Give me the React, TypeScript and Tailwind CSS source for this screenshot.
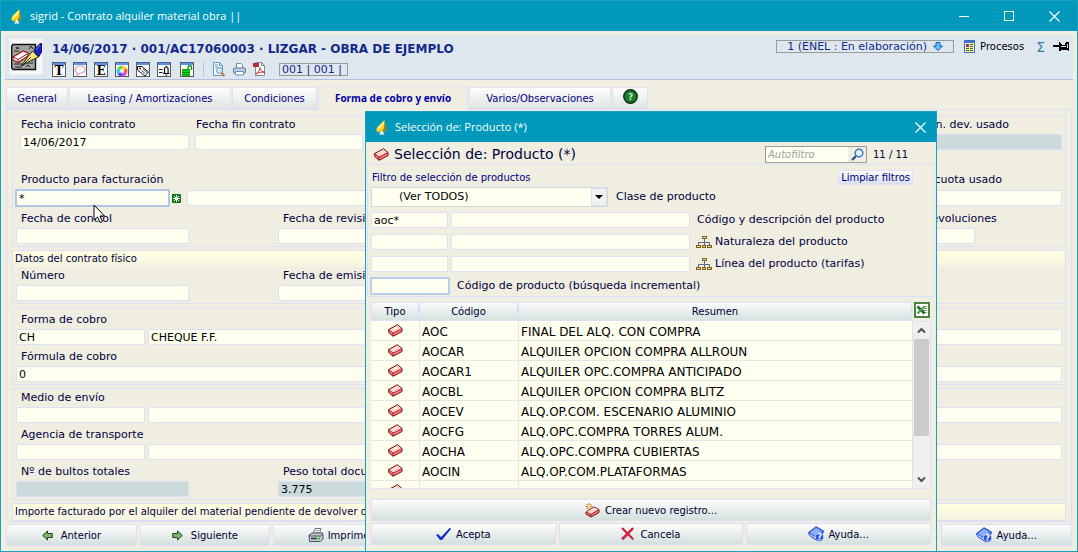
import type { ReactNode } from 'react'

const tabs = [
  { label: 'General', width: 'w-[62px]' },
  { label: 'Leasing / Amortizaciones', width: 'w-[162px]' },
  { label: 'Condiciones', width: 'w-[85px]' },
  { label: 'Forma de cobro y envío', width: 'w-[150px]', active: true },
  { label: 'Varios/Observaciones', width: 'w-[142px]' },
]

const products = [
  { code: 'AOC', summary: 'FINAL DEL ALQ. CON COMPRA' },
  { code: 'AOCAR', summary: 'ALQUILER OPCION COMPRA ALLROUN' },
  { code: 'AOCAR1', summary: 'ALQUILER OPC.COMPRA ANTICIPADO' },
  { code: 'AOCBL', summary: 'ALQUILER OPCION COMPRA BLITZ' },
  { code: 'AOCEV', summary: 'ALQ.OP.COM. ESCENARIO ALUMINIO' },
  { code: 'AOCFG', summary: 'ALQ.OPC.COMPRA TORRES ALUM.' },
  { code: 'AOCHA', summary: 'ALQ.OPC.COMPRA CUBIERTAS' },
  { code: 'AOCIN', summary: 'ALQ.OP.COM.PLATAFORMAS' },
  { code: '', summary: '' },
]

const inputBase = 'block h-4 min-w-0 rounded-[1px] border border-[#dedef4] px-0.5 text-[11px] leading-[14px] text-black outline-none'
const buttonBase =
  'flex h-[22px] items-center justify-center rounded-[1px] border border-[#dedef6] bg-linear-to-b from-[#fdfdfc] to-[#d5dfdf] text-[10px] text-[#000030]'

/* ---------- icons ---------- */

function SpadeIcon() {
  return (
    <svg width="11" height="15" viewBox="0 0 11 15" aria-hidden="true">
      <path d="M8.500 0L3.500 5C1 7 0 9 .5 10.500C1 12.500 3.500 12.500 5 11H6.500C8 12 10 11.500 10 9.500C10 7.500 8.800 6 8.500 0Z" fill="#ffd21a" />
      <path d="M8 1L3.500 5.500C2 7 1 8.500 1 10L4 8.500L7.500 5Z" fill="#fff176" />
      <path d="M8.500 0C8.800 6 10 7.500 10 9.500C10 11 8.500 12 6.500 11C8 9 8.500 6 8.500 0Z" fill="#a8780f" />
      <path d="M3 14.500L5 11H6.500L8.500 14.500Z" fill="#eef3f4" />
    </svg>
  )
}

function EraserIcon() {
  return (
    <svg width="15" height="13" viewBox="0 0 15 13" aria-hidden="true">
      <path d="M.7 5.500L9.500 .7L14 4.500V7.500L5 12.300L.7 8.500Z" fill="#ff7f7f" />
      <path d="M.7 5.500L9.500 .7L14 4.500L5 9Z" fill="#ffd9d5" />
      <path d="M.7 5.500L9.500 .7L14 4.500V7.500L5 12.300L.7 8.500Z" fill="none" stroke="#7d0a0a" strokeLinejoin="round" />
      <path d="M.7 5.500L5 9.200L14 4.500M5 9V12" fill="none" stroke="#8f1414" strokeWidth=".9" />
    </svg>
  )
}

function NewEraserIcon() {
  return (
    <svg width="15" height="15" viewBox="0 0 15 15" aria-hidden="true">
      <path d="M1 9L9 4L14 6.500V9.500L6 14L1 11Z" fill="#ff7f7f" stroke="#7d0a0a" strokeLinejoin="round" />
      <path d="M1.500 9L9 4.500L13.500 6.500L6 11Z" fill="#ffd9d5" />
      <path d="M1 9L6 11.500L14 6.500M6 11.500V14" fill="none" stroke="#8f1414" strokeWidth=".9" />
      <path d="M4 0V7M.5 3.500H7.500M1.500 1L6.500 6M6.500 1L1.500 6" stroke="#c47c1c" />
      <circle cx="4" cy="3.500" r="1.300" fill="#fff2a8" />
    </svg>
  )
}

function ContractIcon() {
  return (
    <svg width="31" height="29" viewBox="0 0 31 29" aria-hidden="true">
      <path d="M2 2.500H24.500V27.500H2L.7 26V4Z" fill="#a3a5a5" stroke="#111" strokeWidth="1.400" />
      <path d="M5 5l1 2 1-2 1 2M18 7l2-3 2 3M4 25h7M15 25l2-2 2 2M3 22h9M14 21h8M16 18h6M3 9h5" fill="none" stroke="#222" />
      <path d="M2 15L12 9L17 11V14L7 20.500L2 18Z" fill="#fff" stroke="#a01515" strokeWidth="1.200" />
      <path d="M2 15L7 17.500L17 11.500M7 17.500V20.500" fill="none" stroke="#a01515" />
      <path d="M23 8L29 1.500H30.500V10L27.500 15Z" fill="#1523c9" stroke="#070a50" />
      <path d="M25 8L29 3" stroke="#6f86ff" />
      <path d="M21.500 9L27.500 15L20 18.500L10.500 24L17 14.500Z" fill="#f3e77a" stroke="#2b2a10" />
      <path d="M11 24L20 15" stroke="#2b2a10" />
    </svg>
  )
}

function ToolFrame({ children }: { children?: ReactNode }) {
  return (
    <svg width="14" height="15" viewBox="0 0 14 15" aria-hidden="true">
      <rect x=".5" y=".5" width="13" height="14" fill="#fdfdfd" stroke="#595959" />
      <rect width="14" height="1" fill="#4a5f80" />
      <rect x="1" y="1" width="12" height="2" fill="#5d92e6" />
      {children}
    </svg>
  )
}

function LetterTool({ letter }: { letter: string }) {
  return (
    <ToolFrame>
      <text x="7" y="13" textAnchor="middle" fontFamily="'DejaVu Serif', serif" fontWeight="700" fontSize="12">
        {letter}
      </text>
    </ToolFrame>
  )
}

function BubbleTool() {
  return (
    <ToolFrame>
      <path d="M7 4C10 4 12 5.500 12 7.500S10 11 7 11L4 13.500V10.500C1 9 2 4 7 4Z" fill="#fff" stroke="#d9a0b4" strokeWidth="1.200" />
    </ToolFrame>
  )
}

function ColorTool() {
  return (
    <ToolFrame>
      <path d="M7 9V3.500A5.500 5.500 0 0 1 11.800 6.200Z" fill="#ffcf30" />
      <path d="M7 9L11.800 6.200A5.500 5.500 0 0 1 11.800 11.700Z" fill="#ff5a3c" />
      <path d="M7 9L11.800 11.700A5.500 5.500 0 0 1 7 14.500Z" fill="#e63ce0" />
      <path d="M7 9V14.500A5.500 5.500 0 0 1 2.200 11.700Z" fill="#4456ff" />
      <path d="M7 9L2.200 11.700A5.500 5.500 0 0 1 2.200 6.200Z" fill="#31d4e8" />
      <path d="M7 9L2.200 6.200A5.500 5.500 0 0 1 7 3.500Z" fill="#5de03c" />
      <circle cx="7" cy="9" r="2.200" fill="#fff" opacity=".8" />
    </ToolFrame>
  )
}

function TagTool() {
  return (
    <ToolFrame>
      <path d="M1.500 4.500H6L12.500 10L9 14L1.500 8Z" fill="#fff" stroke="#111" />
      <circle cx="4" cy="6.500" r=".9" fill="#111" />
      <path d="M5.500 8.500L9 11.500M7 7L11 10.500" stroke="#333" strokeWidth=".9" />
    </ToolFrame>
  )
}

function AlarmTool() {
  return (
    <ToolFrame>
      <path d="M2 7.500h3.500M2 10.500h3.500" stroke="#111" />
      <path d="M7.500 11.500V7a1.800 2 0 0 1 3.600 0v4.500M6 11.500h6.500M9.300 4v1M8.300 13h2" fill="none" stroke="#111" strokeWidth="1.200" />
    </ToolFrame>
  )
}

function UnlockTool() {
  return (
    <ToolFrame>
      <path d="M8 8V5.500a1.700 1.700 0 0 1 3.500 0V8" fill="none" stroke="#0a930a" strokeWidth="1.400" />
      <rect x="2" y="7" width="8" height="7" fill="#12d812" />
      <path d="M2 8h8M2 10.500h8M2 13h8" stroke="#067a06" strokeWidth=".8" />
    </ToolFrame>
  )
}

function PreviewIcon() {
  return (
    <svg width="14" height="15" viewBox="0 0 14 15" aria-hidden="true">
      <path d="M1.500 .5H7.500L10.500 3.500V13.500H1.500Z" fill="#f3f8fd" stroke="#5e9ad0" />
      <path d="M7.500 .5V3.500H10.500M3 3h3M3 5h3" fill="none" stroke="#5e9ad0" />
      <circle cx="7.500" cy="8.500" r="3" fill="#cfe6f7" stroke="#6d8fa8" />
      <path d="M9.500 11L12.500 14" stroke="#c27a25" strokeWidth="2" />
    </svg>
  )
}

function SmallPrinterIcon() {
  return (
    <svg width="13" height="13" viewBox="0 0 13 13" aria-hidden="true">
      <path d="M3.500 5V.5H8L9.500 2V5" fill="#fff" stroke="#5f93c4" />
      <rect x=".5" y="5" width="12" height="5" rx="1" fill="#c3ced9" stroke="#66798c" />
      <path d="M2.500 8.500h8v3.500h-8z" fill="#fff" stroke="#5f93c4" />
    </svg>
  )
}

function PdfIcon() {
  return (
    <svg width="13" height="14" viewBox="0 0 13 14" aria-hidden="true">
      <path d="M2.500 .5H8.500L11.500 3.500V13.500H2.500Z" fill="#fff" stroke="#8a8a8a" />
      <path d="M8.500 .5V3.500H11.500" fill="none" stroke="#8a8a8a" />
      <rect y="1" width="6" height="4" fill="#b52a35" />
      <path d="M3 12C6 9 7 7 7 5.500C7 8 9 10 12 10.500C8 9.500 5 10.500 3 12Z" fill="none" stroke="#c9303c" />
    </svg>
  )
}

function BlueDownIcon() {
  return (
    <svg width="10" height="9" viewBox="0 0 10 9" aria-hidden="true">
      <path d="M3 .5H7V4H9.500L5 8.500L.5 4H3Z" fill="#5cc4fb" stroke="#1f56c9" strokeLinejoin="round" />
    </svg>
  )
}

function ProcessIcon() {
  return (
    <svg width="11" height="13" viewBox="0 0 11 13" shapeRendering="crispEdges" aria-hidden="true">
      <rect width="11" height="13" fill="#3c6fc8" />
      <rect x="1" y="3" width="9" height="9" fill="#fdf79b" />
      <rect x="2" y="4" width="3" height="3" fill="#9d1fb0" />
      <path d="M6 4.500h3M6 6.500h3M2 8.500h3M6 8.500h3M2 10.500h3M6 10.500h3" stroke="#3a6a2b" />
    </svg>
  )
}

function PinIcon() {
  return (
    <svg width="16" height="11" viewBox="0 0 16 11" shapeRendering="crispEdges" aria-hidden="true">
      <path d="M0 5H6" stroke="#000" strokeWidth="2" />
      <path d="M6 1h1v1h1v1h1v1h3V2h1V1h3v9h-1V9H8v1H6Z" fill="#000" />
      <path d="M8 5h5v1H8ZM14 3h1v4h-1Z" fill="#d9dfe2" />
    </svg>
  )
}

function HelpTabIcon() {
  return (
    <svg width="15" height="15" viewBox="0 0 15 15" aria-hidden="true">
      <circle cx="7.500" cy="7.500" r="6.700" fill="#1c7c2c" stroke="#0b2e10" strokeWidth="1.400" />
      <text x="7.500" y="11" textAnchor="middle" fontFamily="'DejaVu Sans', sans-serif" fontWeight="700" fontSize="9" fill="#b6f3bd">
        ?
      </text>
    </svg>
  )
}

function ArrowIcon({ flip }: { flip?: boolean }) {
  return (
    <svg width="11" height="11" viewBox="0 0 11 11" className={flip ? 'rotate-180' : ''} aria-hidden="true">
      <path d="M.7 5.500L5.500 1V3.500H10.300V7.500H5.500V10Z" fill="#7cb86c" stroke="#26401f" strokeLinejoin="round" />
    </svg>
  )
}

function PrinterIcon() {
  return (
    <svg width="16" height="14" viewBox="0 0 16 14" aria-hidden="true">
      <path d="M5 6L7 .5H13L11.500 6Z" fill="#fff" stroke="#6f7c85" />
      <path d="M7.500 2.500H11.500M7 4.500H11" stroke="#8da0ac" />
      <path d="M1 7L4 5H14.500L15 7V11L12.500 13.500H1.500Z" fill="#c3ccd1" stroke="#4a545b" />
      <path d="M1 8H12.500L15 6" fill="none" stroke="#4a545b" />
      <path d="M3 10.500H9" stroke="#2b3135" strokeWidth="1.500" />
      <rect x="10" y="9.500" width="2" height="2" fill="#1fd31f" />
    </svg>
  )
}

function HelpBookIcon() {
  return (
    <svg width="16" height="16" viewBox="0 0 16 16" aria-hidden="true">
      <path d="M.5 6.500L8 .7L15.500 5L14.500 8L9 14.500L1.500 9.500Z" fill="#4f7df0" stroke="#2748b8" strokeLinejoin="round" />
      <path d="M2 6.500L8 2L13 5L8 10Z" fill="#8fb0ff" />
      <path d="M1.500 8.500L8 12.500" stroke="#dfe8ff" />
      <circle cx="11.500" cy="11" r="4.200" fill="#2d57dd" stroke="#dbe5ff" strokeWidth=".7" />
      <text x="11.500" y="14" textAnchor="middle" fontFamily="'DejaVu Sans', sans-serif" fontWeight="700" fontSize="8" fill="#fff">
        ?
      </text>
    </svg>
  )
}

function TreeIcon() {
  return (
    <svg width="16" height="13" viewBox="0 0 16 13" shapeRendering="crispEdges" aria-hidden="true">
      <path d="M8.500 3V9M2.500 9V6.500H13.500V9" fill="none" stroke="#5b6e86" />
      <g fill="#f2dc8c" stroke="#7c5f22">
        <rect x="6.500" y=".5" width="4" height="2" />
        <rect x=".5" y="9.500" width="4" height="2" />
        <rect x="6.500" y="9.500" width="3" height="2" />
        <rect x="11.500" y="9.500" width="4" height="2" />
      </g>
    </svg>
  )
}

function SearchIcon() {
  return (
    <svg width="13" height="13" viewBox="0 0 13 13" aria-hidden="true">
      <path d="M5 8L1 12" stroke="#23447c" strokeWidth="2" />
      <circle cx="8" cy="5" r="3.800" fill="#e9f4fc" stroke="#3b78bd" strokeWidth="1.500" />
    </svg>
  )
}

function ExcelIcon() {
  return (
    <svg width="16" height="16" viewBox="0 0 16 16" aria-hidden="true">
      <rect x="1" y="1" width="14" height="14" fill="#fff" stroke="#4d8443" strokeWidth="2" />
      <path d="M9 4.500H13M9 6.500H13M9 8.500H13M9 10.500H13" stroke="#6fa868" />
      <path d="M3.500 4.500L10.500 11.500" stroke="#1f6b2a" strokeWidth="2.600" />
      <path d="M10.500 4.500L3.500 11.500" stroke="#4c9a4c" strokeWidth="2" />
    </svg>
  )
}

function CheckIcon() {
  return (
    <svg width="15" height="13" viewBox="0 0 15 13" aria-hidden="true">
      <path d="M0 7L2 6L5 9L14 0L15 1L6 12H4Z" fill="#1534d8" />
      <path d="M14 0L5.500 10" stroke="#0c1e7a" strokeWidth=".7" />
    </svg>
  )
}

function CrossIcon() {
  return (
    <svg width="14" height="14" viewBox="0 0 14 14" aria-hidden="true">
      <path d="M2 2L12.500 13M12.500 1.500L2 13" stroke="#8b8f99" strokeWidth="1.500" />
      <path d="M1 1L12 12M12 1L1 12" stroke="#d8173a" strokeWidth="2" />
    </svg>
  )
}

function CloseIcon() {
  return (
    <svg width="11" height="11" viewBox="0 0 11 11" aria-hidden="true">
      <path d="M.5 .5L10.500 10.500M10.500 .5L.5 10.500" stroke="#fff" strokeWidth="1.200" />
    </svg>
  )
}

function ChevronIcon({ down }: { down?: boolean }) {
  return (
    <svg width="9" height="7" viewBox="0 0 9 7" className={down ? 'rotate-180' : ''} aria-hidden="true">
      <path d="M1 5.500L4.500 2L8 5.500" fill="none" stroke="#505050" strokeWidth="2" />
    </svg>
  )
}

/* ---------- form pieces ---------- */

type FieldProps = {
  id: string
  label: string
  value?: string
  className?: string
  readOnly?: boolean
  labelClass?: string
}

function Field({ id, label, value = '', className = '', readOnly, labelClass = 'pl-[5px]' }: FieldProps) {
  return (
    <div className={className}>
      <label htmlFor={id} className={`block h-[18px] leading-[18px] whitespace-nowrap ${labelClass}`}>
        {label}
      </label>
      <input id={id} defaultValue={value} readOnly={readOnly} className={`${inputBase} w-full ${readOnly ? 'bg-[#cbdada]' : 'bg-[#fffff0]'}`} />
    </div>
  )
}

function CodeField({ id, label, code = '', text = '' }: { id: string; label: string; code?: string; text?: string }) {
  return (
    <div>
      <label htmlFor={id} className="block h-[18px] pl-[5px] leading-[18px]">
        {label}
      </label>
      <div className="flex gap-[3px]">
        <input id={id} defaultValue={code} className={`${inputBase} w-[129px] bg-[#fffff0]`} />
        <input aria-label={label} defaultValue={text} className={`${inputBase} flex-1 bg-[#fffff0]`} />
      </div>
    </div>
  )
}

function Group({ title, children }: { title?: string; children?: ReactNode }) {
  return (
    <section className="rounded-[1px] border border-[#dedef6]">
      {title && (
        <h2 className="h-4 bg-linear-to-b from-[#ffffe0] to-[#f5f3e1] pl-0.5 text-[10px] leading-[15px] whitespace-nowrap">{title}</h2>
      )}
      {children && <div className="flex flex-col gap-[3px] px-[3px] pb-0.5">{children}</div>}
    </section>
  )
}

/* ---------- window ---------- */

function TitleBar() {
  return (
    <div className="flex h-[30px] items-center bg-[#0099bc] pl-[10px] text-white">
      <SpadeIcon />
      <h1 className="ml-2 flex-1 font-['Open_Sans',sans-serif] text-[11px]">sigrid - Contrato alquiler material obra ||</h1>
      <button aria-label="Minimizar" className="flex h-full w-[45px] items-center justify-center">
        <span className="h-px w-2.5 bg-white" />
      </button>
      <button aria-label="Maximizar" className="flex h-full w-[45px] items-center justify-center">
        <span className="size-2.5 border border-white" />
      </button>
      <button aria-label="Cerrar" className="flex h-full w-[46px] items-center justify-center">
        <CloseIcon />
      </button>
    </div>
  )
}

function Header() {
  return (
    <header className="mt-1 flex h-[45px] border-b border-[#b4bfe0] bg-[#dde7ed] pl-1">
      <div className="mt-[3px] flex h-[37px] w-[34px] items-center justify-center border border-[#efeee6] bg-[#f6f7fb]">
        <ContractIcon />
      </div>
      <div className="ml-[9px] flex-1">
        <h2 className="mt-1.5 h-4 text-[12px] leading-4 font-bold whitespace-nowrap text-[#15298b]">
          14/06/2017 · 001/AC17060003 · LIZGAR - OBRA DE EJEMPLO
        </h2>
        <div className="mt-1 flex h-4 items-center gap-[7px]">
          <button aria-label="Texto"><LetterTool letter="T" /></button>
          <button aria-label="Comentario"><BubbleTool /></button>
          <button aria-label="Estado"><LetterTool letter="E" /></button>
          <button aria-label="Color"><ColorTool /></button>
          <button aria-label="Etiqueta"><TagTool /></button>
          <button aria-label="Aviso"><AlarmTool /></button>
          <button aria-label="Bloqueo" className="ml-0.5"><UnlockTool /></button>
          <span className="mr-px ml-0.5 h-[15px] w-px bg-[#b9c3dc]" />
          <button aria-label="Vista previa"><PreviewIcon /></button>
          <button aria-label="Imprimir documento"><SmallPrinterIcon /></button>
          <button aria-label="PDF"><PdfIcon /></button>
          <span className="ml-1.5 h-[13px] w-[69px] border border-[#9a9a9a] pl-0.5 text-[11px] leading-[12px] whitespace-nowrap text-[#15298b]">
            001 | 001 |
          </span>
        </div>
      </div>
      <div className="mt-1 flex h-[15px] items-center pr-1">
        <button className="flex h-[13px] w-[178px] items-center justify-center gap-1.5 border border-[#9a9a9a] text-[11px] leading-[11px] whitespace-nowrap text-[#15298b]">
          1 (ENEL : En elaboración)
          <BlueDownIcon />
        </button>
        <button className="ml-2.5 flex items-center gap-[5px] text-[10px] text-black">
          <ProcessIcon />
          Procesos
        </button>
        <button aria-label="Totales" className="ml-3 text-[14px] leading-3 text-[#2b86ad]">Σ</button>
        <button aria-label="Fijar" className="ml-2"><PinIcon /></button>
      </div>
    </header>
  )
}

function Tabs() {
  return (
    <nav className="mt-[5px] flex h-6 items-end text-[10px] text-[#000080]">
      {tabs.map((tab) =>
        tab.active ? (
          <button
            key={tab.label}
            className={`${tab.width} relative z-10 -mb-px ml-px h-6 border border-b-0 border-[#dedef6] bg-[#f0eee1] font-['Open_Sans',sans-serif] text-[10px] font-bold whitespace-nowrap text-[#0000a8]`}
          >
            {tab.label}
          </button>
        ) : (
          <button
            key={tab.label}
            className={`${tab.width} ml-px h-[22px] border border-[#dedef6] bg-linear-to-b from-[#fdfdfb] to-[#dfe6e4] whitespace-nowrap`}
          >
            {tab.label}
          </button>
        ),
      )}
      <button
        aria-label="Ayuda"
        className="ml-px flex h-[22px] w-9 items-center justify-center border border-[#dedef6] bg-linear-to-b from-[#fdfdfb] to-[#dfe6e4] pb-1"
      >
        <HelpTabIcon />
      </button>
    </nav>
  )
}

function ContractForm() {
  return (
    <main className="mx-px flex flex-col gap-[3px] border border-[#dedef6] px-[5px] pt-[5px]">
      <Group>
        <div className="flex gap-1.5 pl-1">
          <Field id="start" label="Fecha inicio contrato" value="14/06/2017" className="w-[169px]" labelClass="pl-px" />
          <Field id="end" label="Fecha fin contrato" className="w-[168px]" labelClass="pl-px" />
          <Field id="min-dev" label="Mín. dev. usado" readOnly className="ml-auto w-[145px]" labelClass="pl-1.5" />
        </div>
        <div className="mt-[18px]">
          <div className="flex h-[18px] justify-between pl-[5px] leading-[18px]">
            <label htmlFor="product">Producto para facturación</label>
            <label htmlFor="min-quota" className="w-[154px]">Mín. cuota usado</label>
          </div>
          <div className="flex items-center">
            <input
              id="product"
              defaultValue="*"
              className="-ml-px h-[18px] w-[155px] rounded-[1px] border-2 border-[#b0c6e8] bg-[#fffff0] px-0.5 text-[11px] text-black outline-none"
            />
            <button aria-label="Buscar producto" className="ml-0.5 flex size-[9px] items-center justify-center rounded-[1px] bg-[#0b7a16]">
              <svg width="7" height="7" viewBox="0 0 7 7" aria-hidden="true">
                <path d="M3.500 0V7M0 3.500H7M1 1L6 6M6 1L1 6" stroke="#fff" />
              </svg>
            </button>
            <input aria-label="Descripción del producto" className={`${inputBase} ml-1.5 flex-1 bg-[#fffff0]`} />
            <input id="min-quota" className={`${inputBase} ml-[3px] w-[145px] bg-[#fffff0]`} />
          </div>
        </div>
        <div className="flex">
          <Field id="control" label="Fecha de control" className="w-[173px]" />
          <Field id="review" label="Fecha de revisión" className="ml-[89px] w-[173px]" />
          <Field id="returns" label="Devoluciones" className="mr-[87px] ml-auto w-[58px]" labelClass="pl-1.5" />
        </div>
      </Group>

      <Group title="Datos del contrato físico">
        <div className="flex">
          <Field id="number" label="Número" className="w-[173px]" />
          <Field id="issued" label="Fecha de emisión" className="ml-[89px] w-[173px]" />
        </div>
      </Group>

      <Group>
        <div className="pt-[3px]">
          <CodeField id="payment" label="Forma de cobro" code="CH" text="CHEQUE F.F." />
        </div>
        <Field id="formula" label="Fórmula de cobro" value="0" />
      </Group>

      <Group>
        <CodeField id="shipping" label="Medio de envío" />
        <CodeField id="agency" label="Agencia de transporte" />
        <div className="flex">
          <Field id="packages" label="Nº de bultos totales" readOnly className="w-[173px]" />
          <Field id="weight" label="Peso total documento" value="3.775" readOnly className="ml-[89px] w-[173px]" />
        </div>
      </Group>

      <Group title="Importe facturado por el alquiler del material pendiente de devolver de" />
    </main>
  )
}

function ProductDialog() {
  return (
    <div
      role="dialog"
      aria-label="Selección de: Producto (*)"
      className="absolute top-[110px] left-[364px] z-20 w-[572px] border border-[#1a9fbf] bg-[#f0eee1]"
    >
      <div className="flex h-[30px] items-center bg-[#0099bc] pr-2.5 pl-[10px] text-white">
        <SpadeIcon />
        <h2 className="ml-2 flex-1 font-['Open_Sans',sans-serif] text-[11px]">Selección de: Producto (*)</h2>
        <button aria-label="Cerrar selección"><CloseIcon /></button>
      </div>

      <div className="flex h-[22px] items-center pt-0.5 pl-2 text-[14px]">
        <EraserIcon />
        <h3 className="ml-[5px] flex-1">Selección de: Producto (*)</h3>
        <div className="flex h-[17px] w-[102px] items-center border border-[#9a9a9a] bg-[#fffff0]">
          <input
            aria-label="Autofiltro"
            placeholder="Autofiltro"
            className="h-full min-w-0 flex-1 pl-0.5 text-[10px] italic outline-none placeholder:text-[#a0a0a0]"
          />
          <button aria-label="Buscar" className="flex h-full w-[18px] items-center justify-center bg-[#f0eee1]">
            <SearchIcon />
          </button>
        </div>
        <span className="w-[69px] pl-1.5 text-[10px]">11 / 11</span>
      </div>

      <section className="mx-px border border-[#dedef6] pr-5 pb-px pl-[3px]">
        <div className="flex h-[22px] items-center justify-between pt-[3px] text-[10px] text-[#000080]">
          <h4 className="pl-px">Filtro de selección de productos</h4>
          <button className="mr-px h-[15px] rounded-[1px] border border-[#dedef6] bg-linear-to-b from-[#fdfdfc] to-[#d9e0ee] px-0.5 leading-[13px]">
            Limpiar filtros
          </button>
        </div>
        <div className="flex h-[20px] items-center">
          <div className="relative h-[20px] w-[237px]">
            <select
              id="class"
              className="h-full w-full appearance-none border border-[#cfdcdc] bg-[#fffff0] pl-[27px] text-[11px] text-black outline-none"
            >
              <option>(Ver TODOS)</option>
            </select>
            <span className="pointer-events-none absolute top-px right-px flex h-[18px] w-4 items-center justify-center border border-[#dedef6] bg-[#f0f2f2]">
              <span className="border-x-4 border-t-4 border-x-transparent border-t-black" />
            </span>
          </div>
          <label htmlFor="class" className="ml-2">Clase de producto</label>
        </div>
        <div className="mt-[5px] flex flex-col gap-1.5">
          <div className="flex h-4 items-center gap-[3px]">
            <input id="f-code" defaultValue="aoc*" className={`${inputBase} w-[77px] bg-[#fffff0]`} />
            <input aria-label="Descripción" className={`${inputBase} w-[239px] bg-[#fffff0]`} />
            <label htmlFor="f-code" className="ml-1">Código y descripción del producto</label>
          </div>
          <div className="flex h-4 items-center gap-[3px]">
            <input id="f-nature" className={`${inputBase} w-[77px] bg-[#fffff0]`} />
            <input aria-label="Descripción de la naturaleza" className={`${inputBase} w-[239px] bg-[#fffff0]`} />
            <label htmlFor="f-nature" className="ml-[3px] flex items-center gap-[3px]"><TreeIcon />Naturaleza del producto</label>
          </div>
          <div className="flex h-4 items-center gap-[3px]">
            <input id="f-line" className={`${inputBase} w-[77px] bg-[#fffff0]`} />
            <input aria-label="Descripción de la línea" className={`${inputBase} w-[239px] bg-[#fffff0]`} />
            <label htmlFor="f-line" className="ml-[3px] flex items-center gap-[3px]"><TreeIcon />Línea del producto (tarifas)</label>
          </div>
        </div>
        <div className="mt-[5px] flex h-[18px] items-center">
          <input id="f-inc" className="-ml-px h-[18px] w-20 rounded-[1px] border-2 border-[#b9cdec] bg-[#fffff0] outline-none" />
          <label htmlFor="f-inc" className="ml-[7px]">Código de producto (búsqueda incremental)</label>
        </div>
      </section>

      <div className="mx-[5px] mt-[5px] flex h-[187px] overflow-hidden border-b border-[#dedef6]">
        <table className="w-full flex-1 table-fixed border-separate border-spacing-0 self-start bg-[#fffff0] text-[12px] text-black">
          <thead>
            <tr className="h-[19px] bg-linear-to-b from-[#fdfdfc] to-[#d5dfdf] text-[10px] text-[#000030]">
              <th className="w-[49px] border border-r-2 border-[#dedef6] p-0 font-normal">Tipo</th>
              <th className="w-[99px] border border-r-2 border-l-0 border-[#dedef6] p-0 font-normal">Código</th>
              <th className="border border-l-0 border-[#dedef6] p-0 font-normal">Resumen</th>
            </tr>
          </thead>
          <tbody>
            {products.map((product, index) => (
              <tr key={index} className="h-5">
                <td className="border-r border-b border-[#e6e6e6] p-0">
                  <div className="flex h-[19px] items-center justify-center"><EraserIcon /></div>
                </td>
                <td className="border-r border-b border-[#e6e6e6] p-0 pt-[3px] pl-0.5 leading-4">{product.code}</td>
                <td className="border-b border-[#e6e6e6] p-0 pt-[3px] pl-0.5 leading-4 whitespace-nowrap">{product.summary}</td>
              </tr>
            ))}
          </tbody>
        </table>
        <div className="flex w-[19px] flex-col">
          <button aria-label="Exportar a Excel" className="flex h-[19px] items-start justify-center"><ExcelIcon /></button>
          <div className="flex min-h-0 flex-1 flex-col items-center border-x border-t border-[#dedef6] bg-[#f0f0f0]">
            <button aria-label="Subir" className="flex h-[17px] items-center"><ChevronIcon /></button>
            <div className="h-[97px] w-[15px] bg-[#cbcbcb]" />
            <button aria-label="Bajar" className="mt-auto flex h-[17px] items-center"><ChevronIcon down /></button>
          </div>
        </div>
      </div>

      <div className="mx-[5px] mt-2.5 mb-1.5 flex flex-col gap-0.5">
        <button className={`${buttonBase} w-full gap-[5px]`}><NewEraserIcon />Crear nuevo registro...</button>
        <div className="grid grid-cols-3 gap-[3px]">
          <button className={`${buttonBase} gap-[5px]`}><CheckIcon />Acepta</button>
          <button className={`${buttonBase} gap-[5px]`}><CrossIcon />Cancela</button>
          <button className={`${buttonBase} gap-1`}><HelpBookIcon />Ayuda...</button>
        </div>
      </div>
    </div>
  )
}

export default function App() {
  return (
    <div className="relative min-h-screen border border-[#1a9fbf] bg-[#f0eee1] font-['DejaVu_Sans',sans-serif] text-[11px] text-[#000040]">
      <TitleBar />
      <div className="px-1">
        <Header />
        <Tabs />
        <ContractForm />
        <footer className="mx-px mt-0.5 grid grid-cols-8 gap-[3px]">
          <button className={`${buttonBase} gap-2`}><ArrowIcon />Anterior</button>
          <button className={`${buttonBase} gap-2`}><ArrowIcon flip />Siguiente</button>
          <button className={`${buttonBase} gap-1`}><PrinterIcon />Imprime</button>
          <button className={`${buttonBase} col-start-8 gap-1`}><HelpBookIcon />Ayuda...</button>
        </footer>
      </div>
      <ProductDialog />
      <svg width="13" height="20" viewBox="0 0 13 20" className="pointer-events-none absolute top-[203px] left-[92px] z-10" aria-hidden="true">
        <path d="M1 1V16L4.500 13L7 18.500L9.500 17.500L7 12H11.500Z" fill="#fff" stroke="#000" />
      </svg>
    </div>
  )
}
